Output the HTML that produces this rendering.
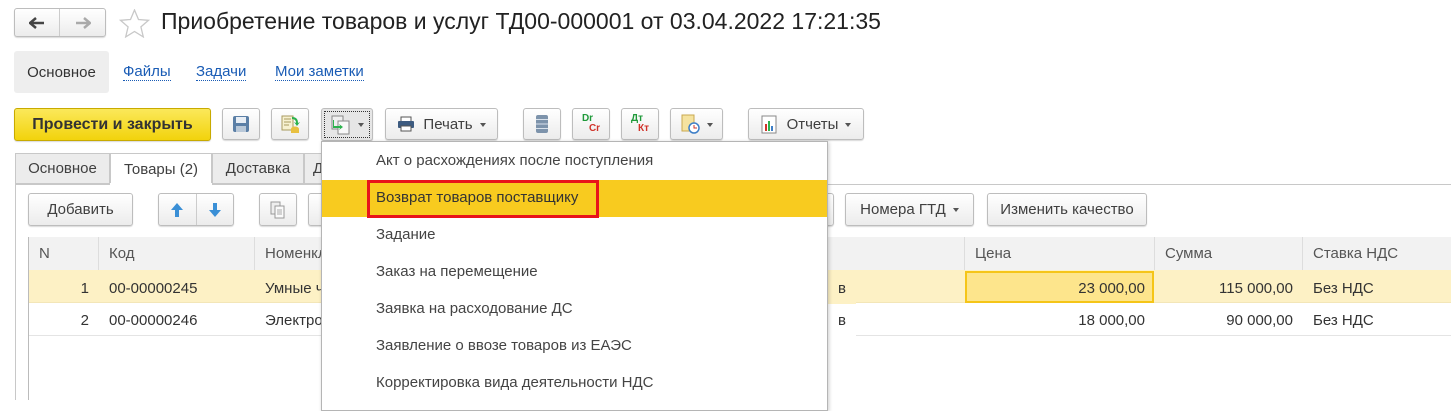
<!DOCTYPE html>
<html><head><meta charset="utf-8"><style>
*{box-sizing:border-box;margin:0;padding:0}
body{width:1451px;height:400px;overflow:hidden;background:#fff;font-family:"Liberation Sans",Arial,sans-serif;font-size:15px;color:#333;position:relative}
.a{position:absolute}
.btn{position:absolute;border:1px solid #bdbdbd;border-radius:3px;background:linear-gradient(#fff,#ececec);box-shadow:0 1px 1px rgba(0,0,0,.15);display:flex;align-items:center;justify-content:center;color:#404040;font-size:15px}
.dd::after{content:"";border:3px solid transparent;border-top:4px solid #555;margin-left:7px;margin-top:4px}
.lnk{color:#1a5cb5;border-bottom:1px dotted #1a5cb5;font-size:15px}
.tab{position:absolute;top:153px;height:31px;border:1px solid #c8c8c8;background:#ececec;display:flex;align-items:center;justify-content:center;font-size:15px;color:#404040}
.th{position:absolute;top:237px;height:33px;background:#f2f2f2;border-right:1px solid #ddd;padding:8px 10px;color:#555}
.td{position:absolute;height:33px;padding:8px 10px;color:#333}
.mi{position:absolute;left:376px;font-size:15px;color:#444}
</style></head><body>
<!-- nav -->
<div class="btn" style="left:14px;top:8px;width:92px;height:29px;justify-content:flex-start">
 <div style="width:45px;height:27px;border-right:1px solid #ccc;display:flex;align-items:center;justify-content:center"><svg width="16" height="12"><path d="M1 6h14M7 1L1 6l6 5" stroke="#444" stroke-width="2.5" fill="none"/></svg></div>
 <div style="width:45px;display:flex;justify-content:center"><svg width="16" height="12"><path d="M1 6h14M9 1l6 5-6 5" stroke="#aaa" stroke-width="2.5" fill="none"/></svg></div>
</div>
<svg class="a" style="left:119px;top:9px" width="31" height="29"><path d="M15.5 1l4 9.5 10 .8-7.6 6.6 2.4 10-8.8-5.4-8.8 5.4 2.4-10L1.5 11.3l10-.8z" fill="none" stroke="#c8c8c8" stroke-width="1.3"/></svg>
<div class="a" style="left:161px;top:8px;font-size:23px;color:#222">Приобретение товаров и услуг ТД00-000001 от 03.04.2022 17:21:35</div>
<!-- section tabs -->
<div class="a" style="left:14px;top:51px;width:95px;height:42px;background:#eeeeee;border-radius:3px;display:flex;align-items:center;justify-content:center;color:#333">Основное</div>
<div class="a" style="left:123px;top:63px"><span class="lnk">Файлы</span></div>
<div class="a" style="left:196px;top:63px"><span class="lnk">Задачи</span></div>
<div class="a" style="left:275px;top:63px"><span class="lnk">Мои заметки</span></div>
<!-- toolbar -->
<div class="btn" style="left:14px;top:108px;width:197px;height:33px;background:linear-gradient(#fbe85a,#f2d30c);border-color:#c8aa00;font-weight:bold;font-size:16px;color:#333">Провести и закрыть</div>
<div class="btn" style="left:222px;top:108px;width:38px;height:32px"><svg width="18" height="18"><rect x="1" y="1" width="16" height="16" rx="2" fill="#5b7fa6"/><rect x="4" y="2" width="10" height="6" fill="#e8eef5"/><rect x="4" y="11" width="10" height="6" fill="#b9c8d8"/></svg></div>
<div class="btn" style="left:271px;top:108px;width:38px;height:32px"><svg width="20" height="20"><rect x="2" y="2" width="11" height="14" fill="#f7f1d0" stroke="#a89a60"/><path d="M4 5h7M4 8h7M4 11h5" stroke="#a89a60"/><ellipse cx="15" cy="15" rx="4" ry="2.5" fill="#e8c040"/><rect x="11" y="15" width="8" height="4" fill="#e8c040"/><path d="M12 3q6 0 6 6l2-1-3 4-3-4 2 1q0-4-4-4z" fill="#2bb24c"/></svg></div>
<div class="btn" style="left:321px;top:108px;width:52px;height:33px;background:#e6e6e6;outline:1px dotted #333;outline-offset:-4px" ><span class="dd" style="display:flex;align-items:center"><svg width="20" height="20"><rect x="1" y="1" width="11" height="13" fill="#f0f0f0" stroke="#888"/><rect x="7" y="6" width="11" height="13" fill="#f8f8f8" stroke="#888"/><path d="M3 5v6h6l-1-2 4 3-4 3 1-2H2V5z" fill="#2bb24c"/></svg></span></div>
<div class="btn dd" style="left:385px;top:108px;width:113px;height:32px"><svg width="18" height="16" style="margin-right:8px"><rect x="4" y="1" width="10" height="5" fill="#fff" stroke="#555"/><rect x="1" y="5" width="16" height="7" rx="1" fill="#3d5b80"/><rect x="4" y="10" width="10" height="5" fill="#fff" stroke="#555"/></svg>Печать</div>
<div class="btn" style="left:523px;top:108px;width:38px;height:32px"><svg width="14" height="20"><rect x="1" y="1" width="12" height="18" rx="2" fill="#7d93ab"/><path d="M1 5.5h12M1 10h12M1 14.5h12" stroke="#d9e2ec"/></svg></div>
<div class="btn" style="left:572px;top:108px;width:38px;height:32px;font-weight:bold;font-size:10px;line-height:10px"><div><span style="color:#1f9a3a">Dr</span><br><span style="color:#d0332a;margin-left:7px">Cr</span></div></div>
<div class="btn" style="left:621px;top:108px;width:38px;height:32px;font-weight:bold;font-size:10px;line-height:10px"><div><span style="color:#1f9a3a">Дт</span><br><span style="color:#d0332a;margin-left:7px">Кт</span></div></div>
<div class="btn dd" style="left:670px;top:108px;width:53px;height:32px"><svg width="20" height="20"><rect x="2" y="1" width="12" height="16" fill="#f5e3a0" stroke="#c9a850"/><circle cx="14" cy="14" r="5" fill="#fff" stroke="#3e7fc7" stroke-width="1.5"/><path d="M14 11v3h3" stroke="#d0332a" fill="none"/></svg></div>
<div class="btn dd" style="left:748px;top:108px;width:116px;height:32px"><svg width="18" height="20" style="margin-right:8px"><rect x="1" y="2" width="14" height="17" fill="#fff" stroke="#888"/><rect x="4" y="10" width="2" height="7" fill="#d0332a"/><rect x="7" y="7" width="2" height="10" fill="#2bb24c"/><rect x="10" y="12" width="2" height="5" fill="#3e7fc7"/></svg>Отчеты</div>
<!-- page tabs -->
<div class="tab" style="left:15px;width:95px">Основное</div>
<div class="tab" style="left:110px;width:102px;background:#fff;border-bottom-color:#fff;height:32px">Товары (2)</div>
<div class="tab" style="left:212px;width:92px">Доставка</div>
<div class="tab" style="left:304px;width:40px;justify-content:flex-start;padding-left:8px">Д</div>
<div class="a" style="left:15px;top:184px;width:1436px;height:216px;border-left:1px solid #c8c8c8;border-top:1px solid #c8c8c8"></div>
<div class="a" style="left:110px;top:183px;width:102px;height:3px;background:#fff"></div>
<!-- inner toolbar -->
<div class="btn" style="left:28px;top:193px;width:105px;height:33px">Добавить</div>
<div class="btn" style="left:158px;top:193px;width:76px;height:33px;justify-content:flex-start">
 <div style="width:38px;height:31px;border-right:1px solid #ccc;display:flex;align-items:center;justify-content:center"><svg width="14" height="16"><path d="M7 1L1 8h4v7h4V8h4z" fill="#3a8fd6"/></svg></div>
 <div style="width:37px;display:flex;justify-content:center"><svg width="14" height="16"><path d="M7 15L1 8h4V1h4v7h4z" fill="#3a8fd6"/></svg></div></div>
<div class="btn" style="left:259px;top:193px;width:38px;height:33px"><svg width="16" height="18"><rect x="1" y="1" width="9" height="12" fill="#eee" stroke="#999"/><rect x="5" y="5" width="9" height="12" fill="#fafafa" stroke="#999"/><path d="M7 9h5M7 11h5M7 13h5" stroke="#aaa"/></svg></div>
<div class="btn" style="left:308px;top:193px;width:20px;height:33px"></div>
<div class="btn" style="left:810px;top:193px;width:24px;height:33px"></div>
<div class="btn dd" style="left:845px;top:193px;width:129px;height:33px">Номера ГТД</div>
<div class="btn" style="left:987px;top:193px;width:160px;height:33px">Изменить качество</div>
<!-- table -->
<div class="a" style="left:28px;top:237px;width:1423px;height:163px;border-left:1px solid #bbb;border-top:1px solid #bbb"></div>
<div class="th" style="left:29px;width:70px">N</div>
<div class="th" style="left:99px;width:156px">Код</div>
<div class="th" style="left:255px;width:710px">Номенклатура</div>
<div class="th" style="left:965px;width:190px">Цена</div>
<div class="th" style="left:1155px;width:148px">Сумма</div>
<div class="th" style="left:1303px;width:148px;border-right:0">Ставка НДС</div>
<div class="a" style="left:29px;top:270px;width:1422px;height:33px;background:#fdf1c5;border-bottom:1px solid #f3e6b8"></div>
<div class="a" style="left:29px;top:335px;width:1422px;height:1px;background:#e4e4e4"></div>
<div class="a" style="left:965px;top:271px;width:189px;height:32px;background:#fde58c;border:2px solid #f5c518"></div>
<div class="td" style="left:29px;top:272px;width:70px;text-align:right">1</div>
<div class="td" style="left:99px;top:272px">00-00000245</div>
<div class="td" style="left:255px;top:272px">Умные часы</div>
<div class="td" style="left:965px;top:272px;width:190px;text-align:right">23 000,00</div>
<div class="td" style="left:1155px;top:272px;width:148px;text-align:right">115 000,00</div>
<div class="td" style="left:1303px;top:272px">Без НДС</div>
<div class="td" style="left:29px;top:304px;width:70px;text-align:right">2</div>
<div class="td" style="left:99px;top:304px">00-00000246</div>
<div class="td" style="left:255px;top:304px">Электросамокат</div>
<div class="td" style="left:965px;top:304px;width:190px;text-align:right">18 000,00</div>
<div class="td" style="left:1155px;top:304px;width:148px;text-align:right">90 000,00</div>
<div class="td" style="left:1303px;top:304px">Без НДС</div>
<div class="td" style="left:828px;top:272px;background:#fdf1c5;padding-left:10px">в</div>
<div class="td" style="left:828px;top:304px;background:#fff;padding-left:10px">в</div>
<!-- dropdown -->
<div class="a" style="left:321px;top:141px;width:507px;height:270px;background:#fff;border:1px solid #b5b5b5;box-shadow:1px 1px 4px rgba(0,0,0,.2)"></div>
<div class="a" style="left:322px;top:180px;width:505px;height:37px;background:#f8cb1f"></div>
<div class="a" style="left:367px;top:180px;width:232px;height:38px;border:3px solid #e8141a"></div>
<div class="mi" style="top:152px">Акт о расхождениях после поступления</div>
<div class="mi" style="top:189px;color:#333">Возврат товаров поставщику</div>
<div class="mi" style="top:226px">Задание</div>
<div class="mi" style="top:263px">Заказ на перемещение</div>
<div class="mi" style="top:300px">Заявка на расходование ДС</div>
<div class="mi" style="top:337px">Заявление о ввозе товаров из ЕАЭС</div>
<div class="mi" style="top:374px">Корректировка вида деятельности НДС</div>
</body></html>
